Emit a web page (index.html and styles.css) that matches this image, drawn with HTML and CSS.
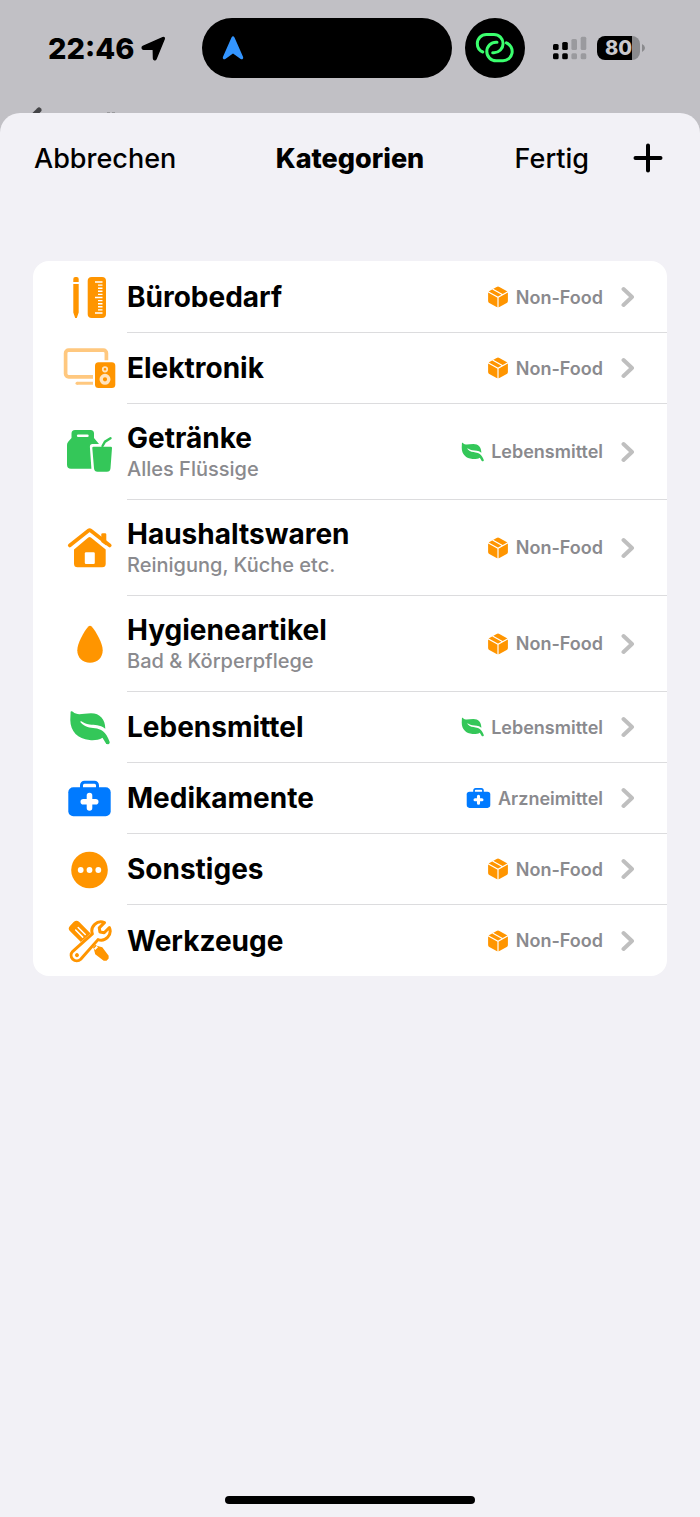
FILE: index.html
```html
<!DOCTYPE html>
<html lang="de">
<head>
<meta charset="utf-8">
<meta name="viewport" content="width=device-width">
<title>Kategorien</title>
<link rel="stylesheet" href="styles.css">
</head>
<body>
<svg class="sprite">
  <symbol id="pencil" viewBox="0 0 53 44">
    <path d="M10.300 6V3a2 2 0 0 1 2-2h1.400a2 2 0 0 1 2 2v3zM10.300 8h5.400v28.500L13.800 42h-1.600l-1.900-5.500z"/>
    <rect x="24.700" y="1" width="18.300" height="41" rx="4"/>
    <path fill="none" stroke="#fff" stroke-width="1.400" d="M32 6h7.500M35 9.100h4.500M35 12.200h4.500M35 15.300h4.500M35 18.400h4.500M32 21.500h7.500M35 24.600h4.500M35 27.700h4.500M35 30.800h4.500M35 33.900h4.500M32 37h7.500"/>
  </symbol>
  <symbol id="devices" viewBox="0 0 53 44">
    <path fill="none" stroke="#ffc87f" stroke-width="3.700" d="M43.400 13.300V6.200a3 3 0 0 0-3-3H5.600a3 3 0 0 0-3 3v20.600a3 3 0 0 0 3 3H30"/>
    <path fill="none" stroke="#ffc87f" stroke-width="3" d="M14 36.300h16"/>
    <circle cx="14" cy="36.300" r="1.500" fill="#ffc87f"/>
    <rect x="32" y="15.300" width="20.300" height="25.700" rx="3.500"/>
    <circle cx="42" cy="22.300" r="2.200" fill="none" stroke="#ffe4bf" stroke-width="1.800"/>
    <circle cx="42" cy="32.300" r="3.800" fill="none" stroke="#ffe4bf" stroke-width="3.400"/>
  </symbol>
  <symbol id="drinks" viewBox="0 0 53 44">
    <path d="M12 0h15.500A3.500 3.500 0 0 1 31 3.500V8l5 6h-6.500q-2.800 0-2.600 3l1.500 21.700H8a4 4 0 0 1-4-4V15q0-2 1.200-3.300L8.500 8V3.500A3.500 3.500 0 0 1 12 0z"/>
    <path d="M30.500 16.700h17.300q1.300 0 1.200 1.300l-1.500 20.200q-.3 3.500-3.600 3.500h-9.300q-3.300 0-3.600-3.500L29.300 18q-.1-1.300 1.200-1.300z"/>
    <path fill="none" stroke="currentColor" stroke-width="2.400" stroke-linecap="round" d="M39.500 16l2.500-4.300 5.500-3.500"/>
    <path fill="none" stroke="#fff" stroke-width="2.600" stroke-linecap="round" d="M15.200 5.700h9.200"/>
  </symbol>
  <symbol id="house" viewBox="0 0 53 44">
    <path d="M38.300 16V8.500q0-1.300 1.300-1.300H42q1.300 0 1.300 1.300v11z"/>
    <path d="M25.300 11.500q1.300-1 2.600 0L42.700 23.500v14.300q0 3.500-3.500 3.500H14.500q-3.500 0-3.500-3.500V23.500z"/>
    <path fill="none" stroke="currentColor" stroke-width="3.600" stroke-linecap="round" stroke-linejoin="round" d="M6.700 19.500L25.600 4.500q1-.8 2 0L46.800 19.500"/>
    <rect x="21.800" y="26.300" width="10" height="11.600" rx="1.200" fill="#fff"/>
  </symbol>
  <symbol id="drop" viewBox="0 0 53 44">
    <path d="M25.400 4.500q1.600-1.700 3.200 0C33.500 10 39.700 21.500 39.700 28.300c0 7.500-5.200 12.400-12.700 12.400s-12.700-4.900-12.700-12.400C14.300 21.500 20.500 10 25.400 4.500z"/>
  </symbol>
  <symbol id="leaf" viewBox="6 5 41 35">
    <path d="M7.600 7.200C7.600 5.800 9.200 6 9.900 6.800 14 11 20 8.300 28 8.300c9 0 14.300 6 14.300 15.500C36.500 19.500 32 20.500 26.500 19.600c-3.500-.6-6-1.800-8.200-3.300-.8-.5-1.300.3-.8 1 4.500 5 9.500 5.500 14.500 6 5.500.6 11 3 14.600 13.500.7 2.300-2.800 3.400-3.900 1.200l-3.200-5.300c-4 2.300-8.500 2.800-13 2.300C15 34 7.300 26.500 7.300 15z"/>
  </symbol>
  <symbol id="medkit" viewBox="4 3 45 39">
    <rect x="5.300" y="11.300" width="42.400" height="29" rx="5"/>
    <path fill="none" stroke="currentColor" stroke-width="3" d="M18.500 13V9.200a3 3 0 0 1 3-3h10a3 3 0 0 1 3 3V13"/>
    <path fill="none" stroke="#fff" stroke-width="5.600" stroke-linecap="round" d="M26.500 19.500V32M20.300 25.700h12.400"/>
  </symbol>
  <symbol id="more" viewBox="0 0 53 44">
    <circle cx="26.500" cy="22" r="18.300"/>
    <g fill="#fff"><circle cx="17.700" cy="22" r="2.900"/><circle cx="26.500" cy="22" r="2.900"/><circle cx="35.300" cy="22" r="2.900"/></g>
  </symbol>
  <symbol id="tools" viewBox="0 0 53 44">
    <g transform="translate(11 7) rotate(-45)">
      <path d="M-6.500 1q0-4 4-4h5q4 0 4 4v22h-13zM-2 17h4v15h-4zM-2 30l-3 5 1.500 10.500 2 2h3l2-2L5 35l-3-5z"/>
      <path fill="none" stroke="#fff" stroke-width="1.500" stroke-linecap="round" d="M-1.700 4v10M1.900 4v10"/>
    </g>
    <g transform="translate(38 12) rotate(45)">
      <path fill="#fff" stroke="#fff" stroke-width="4.500" d="M-3.500 10L-5 34.300a5 5 0 0 0 10 0L3.500 10z"/>
      <path fill="#fff" stroke="currentColor" stroke-width="3" stroke-linejoin="round" d="M-3.500-8.400V-1L0 1.500 3.500-1v-7.400A9.100 9.100 0 0 1 4 8.200L5.600 34.300a5.600 5.600 0 0 1-11.200 0L-4 8.200a9.100 9.100 0 0 1 .5-16.600z"/>
      <circle cx="0" cy="34" r="2"/>
    </g>
  </symbol>
  <symbol id="box" viewBox="0 0 22 22">
    <path d="M9.600.9q1.400-.8 2.800 0l7.200 4.100q1.300.8 1.300 2.200v7.800q0 1.300-1.200 2L12.400 21q-1.400.8-2.800 0L2.300 17q-1.200-.7-1.200-2V7.200q0-1.400 1.300-2.200z"/>
    <path fill="none" stroke="#fff" stroke-width="1.200" d="M1 5.700l10 5.600 10-5.600M11 11.300V22M5.500 2.900l10.300 5.800"/>
  </symbol>
  <symbol id="chevron" viewBox="0 0 14 22">
    <path fill="none" stroke="currentColor" stroke-width="4" stroke-linecap="round" stroke-linejoin="round" d="M2.500 3l8.500 8-8.500 8"/>
  </symbol>
</svg>

<header class="status">
  <div class="clock">
    <span>22:46</span>
    <svg width="25" height="25" viewBox="0 0 25 25"><path stroke="#000" stroke-width="1.400" stroke-linejoin="round" d="M21.800 1.600q2-.5 1.400 1.400l-8.200 20c-.7 1.400-2.400 1-2.500-.6l-.2-8.200q0-.8-.8-.8l-8.800-.2C.9 13 .6 11.200 2 10.500z"/></svg>
  </div>
  <div class="island">
    <svg width="22" height="24" viewBox="0 0 22 24"><path fill="#3395ff" d="M9.500 1.600q1.500-2.700 3 0l8.500 19.200c.7 2-.8 3-2.300 2.100L11 17.400l-7.700 5.500C1.800 23.800.3 22.800 1 20.800z"/></svg>
  </div>
  <div class="hotspot">
    <svg width="42" height="34" viewBox="0 0 42 34"><g fill="none" stroke="#3bff6e" stroke-width="3" stroke-linecap="round"><path d="M8.800 21C5 19.500 3.300 16 3.300 12.600a9.100 9.100 0 0 1 9.100-9.100h7.600a9.100 9.100 0 0 1 0 18.200h-1.300"/><path d="M23 11.200h-.9a9.300 9.300 0 0 0 0 18.600h6.900a9.300 9.300 0 0 0 3.400-17.900"/></g></svg>
  </div>
  <div class="indicators">
    <svg width="34" height="24" viewBox="0 0 34 24"><rect y="8" width="5.600" height="6" rx="1.500"/><rect y="17.300" width="5.600" height="6" rx="1.500"/><rect x="9.200" y="6" width="5.600" height="8" rx="1.500"/><rect x="9.200" y="17.300" width="5.600" height="6" rx="1.500"/><g fill="#9a9a9e"><rect x="18.400" y="3" width="5.600" height="11" rx="1.500"/><rect x="18.400" y="17.300" width="5.600" height="6" rx="1.500"/><rect x="27.700" y=".7" width="5.600" height="13.300" rx="1.500"/><rect x="27.700" y="17.300" width="5.600" height="6" rx="1.500"/></g></svg>
    <div class="battery">80</div>
    <svg width="3" height="8" viewBox="0 0 3 8"><path fill="#8a8a8d" d="M0 0q3 1.500 3 4T0 8z"/></svg>
  </div>
</header>

<!-- previous screen peeking out above the sheet -->
<div class="behind">
  <svg width="90" height="12" viewBox="0 0 90 12"><path fill="none" stroke="#444447" stroke-width="5" stroke-linecap="round" d="M8 3L0 11"/><path fill="#9a9a9d" d="M76 5h3v1h-3zM81 5h3v1h-3z"/></svg>
</div>

<main class="sheet">
  <nav class="bar">
    <button class="cancel" type="button">Abbrechen</button>
    <h1>Kategorien</h1>
    <div class="actions">
      <button type="button">Fertig</button>
      <button class="add" type="button" aria-label="Hinzufügen"><svg width="30" height="30" viewBox="0 0 30 30"><path stroke="#000" stroke-width="4" stroke-linecap="round" d="M15 2.500v25M2.500 15h25"/></svg></button>
    </div>
  </nav>

  <ul class="list">
    <li><a class="row" href="#buero">
      <svg class="icon orange"><use href="#pencil"/></svg>
      <div class="content"><div class="text"><h2>Bürobedarf</h2></div>
      <span class="tag"><svg class="box orange"><use href="#box"/></svg>Non-Food</span><svg class="chevron"><use href="#chevron"/></svg></div>
    </a></li>
    <li><a class="row" href="#elektronik">
      <svg class="icon orange"><use href="#devices"/></svg>
      <div class="content"><div class="text"><h2>Elektronik</h2></div>
      <span class="tag"><svg class="box orange"><use href="#box"/></svg>Non-Food</span><svg class="chevron"><use href="#chevron"/></svg></div>
    </a></li>
    <li><a class="row tall" href="#getraenke">
      <svg class="icon green"><use href="#drinks"/></svg>
      <div class="content"><div class="text"><h2>Getränke</h2><p>Alles Flüssige</p></div>
      <span class="tag"><svg class="leaf green"><use href="#leaf"/></svg>Lebensmittel</span><svg class="chevron"><use href="#chevron"/></svg></div>
    </a></li>
    <li><a class="row tall" href="#haushalt">
      <svg class="icon orange"><use href="#house"/></svg>
      <div class="content"><div class="text"><h2>Haushaltswaren</h2><p>Reinigung, Küche etc.</p></div>
      <span class="tag"><svg class="box orange"><use href="#box"/></svg>Non-Food</span><svg class="chevron"><use href="#chevron"/></svg></div>
    </a></li>
    <li><a class="row tall" href="#hygiene">
      <svg class="icon orange"><use href="#drop"/></svg>
      <div class="content"><div class="text"><h2>Hygieneartikel</h2><p>Bad &amp; Körperpflege</p></div>
      <span class="tag"><svg class="box orange"><use href="#box"/></svg>Non-Food</span><svg class="chevron"><use href="#chevron"/></svg></div>
    </a></li>
    <li><a class="row" href="#lebensmittel">
      <svg class="icon green short"><use href="#leaf"/></svg>
      <div class="content"><div class="text"><h2>Lebensmittel</h2></div>
      <span class="tag"><svg class="leaf green"><use href="#leaf"/></svg>Lebensmittel</span><svg class="chevron"><use href="#chevron"/></svg></div>
    </a></li>
    <li><a class="row" href="#medikamente">
      <svg class="icon blue medium"><use href="#medkit"/></svg>
      <div class="content"><div class="text"><h2>Medikamente</h2></div>
      <span class="tag"><svg class="kit blue"><use href="#medkit"/></svg>Arzneimittel</span><svg class="chevron"><use href="#chevron"/></svg></div>
    </a></li>
    <li><a class="row" href="#sonstiges">
      <svg class="icon orange"><use href="#more"/></svg>
      <div class="content"><div class="text"><h2>Sonstiges</h2></div>
      <span class="tag"><svg class="box orange"><use href="#box"/></svg>Non-Food</span><svg class="chevron"><use href="#chevron"/></svg></div>
    </a></li>
    <li><a class="row" href="#werkzeuge">
      <svg class="icon orange"><use href="#tools"/></svg>
      <div class="content"><div class="text"><h2>Werkzeuge</h2></div>
      <span class="tag"><svg class="box orange"><use href="#box"/></svg>Non-Food</span><svg class="chevron"><use href="#chevron"/></svg></div>
    </a></li>
  </ul>

  <div class="home"></div>
</main>
</body>
</html>
```
FILE: styles.css
```css
* {box-sizing: border-box;}
html, body, h1, h2, p, ul {margin: 0; padding: 0;}
body {display: flex; flex-direction: column; min-height: 100vh; background-color: #c1c0c5; color: #000; font-family: Inter, "Liberation Sans", sans-serif;}
svg {display: block; flex: none; fill: currentColor;}
button {padding: 0; border: 0; background: none; color: inherit; font: inherit; cursor: pointer;}
.sprite {position: absolute; width: 0; height: 0;}

.orange {color: #ff9500;}
.green {color: #34c759;}
.blue {color: #007aff;}

/* status bar */
.status {display: flex; align-items: center; height: 96px;}
.clock {flex: 1; display: flex; align-items: center; gap: 7px; padding-left: 48px; font-size: 29px; font-weight: 800;}
.island {display: flex; align-items: center; width: 250px; height: 60px; padding-left: 20px; border-radius: 30px; background-color: #000;}
.hotspot {display: flex; align-items: center; justify-content: center; width: 60px; height: 60px; margin-left: 13px; border-radius: 50%; background-color: #000;}
.indicators {display: flex; align-items: center; width: 175px; padding-left: 28px;}
.battery {width: 43px; height: 24px; margin: 0 2px 0 10px; border-radius: 8px; background: linear-gradient(to right, #000 35px, #8a8a8d 35px); color: #c9c8cd; font-size: 20px; font-weight: 800; line-height: 24px; text-align: center;}

.behind {height: 17px; padding: 11px 0 0 31px; overflow: hidden;}

.sheet {flex: 1; display: flex; flex-direction: column; border-radius: 20px 20px 0 0; background-color: #f2f1f6;}
.bar {display: grid; grid-template-columns: 1fr auto 1fr; align-items: center; height: 90px; padding: 0 34px; font-size: 27px; font-weight: 500;}
.bar h1 {font-size: 27px; font-weight: 800;}
.cancel {justify-self: start;}
.actions {display: flex; align-items: center; justify-content: flex-end; gap: 41px;}
.add {display: flex; align-items: center; justify-content: center; width: 36px; height: 44px;}

/* category list */
.list {margin: 58px 33px 0; padding-top: 1px; border-radius: 16px; background-color: #fff; list-style: none; overflow: hidden;}
.row {display: flex; align-items: center; height: 71px; padding-left: 30px; color: inherit; text-decoration: none;}
.row.tall {height: 96px;}
.icon {width: 53px; height: 44px;}
.icon.short {height: 35px;}
.icon.medium {height: 39px;}
.content {flex: 1; display: flex; align-items: center; align-self: stretch; margin-left: 11px; padding-right: 32px; border-bottom: 1px solid #dcdcde;}
li:last-child .content {border-bottom: 0;}
.text {flex: 1;}
h2 {font-size: 28px; font-weight: 700; line-height: 34px;}
.text p {color: #8a8a8e; font-size: 20px; font-weight: 500; line-height: 28px;}
.tag {display: flex; align-items: center; gap: 7px; color: #8a8a8e; font-size: 18px; font-weight: 600;}
.box {width: 22px; height: 22px;}
.leaf {width: 23px; height: 20px;}
.kit {width: 25px; height: 22px;}
.chevron {width: 14px; height: 22px; margin-left: 18px; color: #bfbfbf;}

.home {width: 250px; height: 8px; margin: auto auto 13px; border-radius: 4px; background-color: #000;}
```
